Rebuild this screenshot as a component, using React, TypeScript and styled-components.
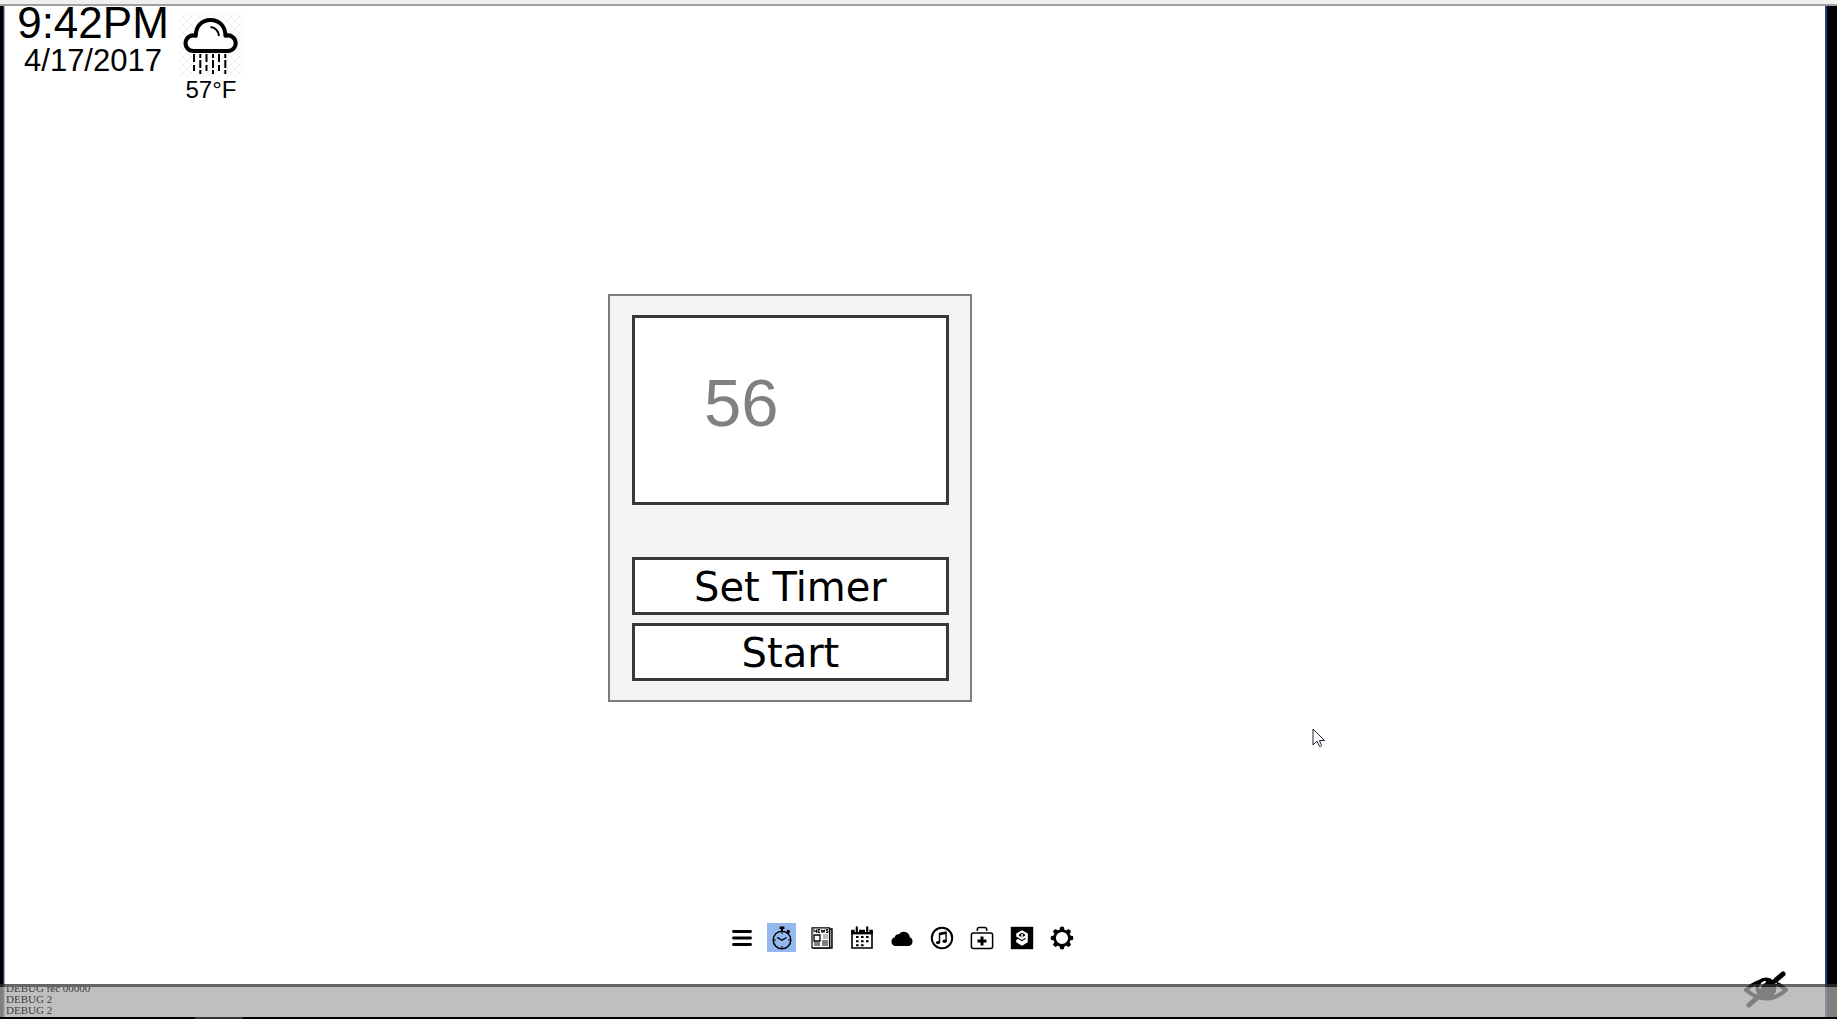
import React from "react";
import styled, { createGlobalStyle } from "styled-components";

const GlobalStyle = createGlobalStyle`
  *, *::before, *::after { box-sizing: border-box; }
  html, body { margin: 0; background: #000; }
  body { font-family: "Liberation Sans", Arial, sans-serif; color: #000; overflow: hidden; }
  button { font: inherit; color: inherit; cursor: pointer; }
`;

const Screen = styled.div`
  position: relative;
  display: flex;
  flex-direction: column;
  height: 100vh;
`;

const TopStrip = styled.div`
  flex: none;
  height: 6px;
  background: #f0f0f0;
  border-bottom: 2px solid #a0a0a0;
`;

const BottomStrip = styled.div`
  flex: none;
  height: 2px;
  padding-left: 195px;
  background: #000;
`;

const StripThumb = styled.div`
  width: 48px;
  height: 2px;
  background: #333;
`;

const Mirror = styled.main`
  flex: 1;
  display: flex;
  flex-direction: column;
  min-height: 0;
  margin: 0 10px 0 3px;
  background: #fff;
  border-left: 1px solid #24407c;
  border-right: 2px solid #24407c;
  box-shadow: inset 1px 0 #a8a8a8;
`;

const Header = styled.header`
  display: flex;
  align-items: flex-start;
  gap: 10px;
  height: 100px;
  padding-left: 13px;
`;

const Clock = styled.div`
  display: flex;
  flex-direction: column;
  align-items: center;
  width: 152px;
`;

const Time = styled.time`
  font-size: 44px;
  line-height: 34px;
`;

const DateText = styled.time`
  font-size: 31px;
  line-height: 42px;
`;

const Weather = styled.div`
  display: flex;
  flex-direction: column;
  align-items: center;
  width: 64px;
  padding-top: 7px;
  font-size: 24px;
  line-height: 26px;
`;

const WeatherIcon = styled.svg`
  display: block;
  width: 64px;
  height: 64px;
`;

const Stage = styled.section`
  flex: 1;
  padding: 188px 0 0 calc(33% + 3px);
`;

const Card = styled.div`
  display: flex;
  flex-direction: column;
  width: 364px;
  padding: 19px 21px 19px 22px;
  background: #f4f4f4;
  border: 2px solid #7c7c7c;
`;

const Display = styled.output`
  display: block;
  height: 190px;
  margin-bottom: 52px;
  padding: 46px 69px;
  background: #fff;
  border: 3px solid #383838;
  color: #808080;
  font-size: 67px;
  line-height: 78px;
`;

const TimerButtons = styled.div`
  display: flex;
  flex-direction: column;
  gap: 8px;
`;

const TimerButton = styled.button`
  height: 58px;
  padding: 2px 0 0;
  background: #fff;
  border: 3px solid #383838;
  && { font-family: "DejaVu Sans", Verdana, sans-serif; font-size: 40px; line-height: 44px; }
`;

const Dock = styled.nav`
  display: flex;
  justify-content: center;
  gap: 11px;
  padding: 0 26px 65px 0;
`;

const DockButton = styled.button<{ $active?: boolean }>`
  display: grid;
  place-items: center;
  width: 29px;
  height: 29px;
  padding: 0;
  border: 0;
  background: ${({ $active }) => ($active ? "#94b7ef" : "transparent")};
`;

const DockIcon = styled.svg`
  display: block;
  width: 24px;
  height: 24px;
`;

const DebugPanel = styled.footer`
  position: absolute;
  left: 0;
  right: 0;
  bottom: 2px;
  display: flex;
  flex-direction: column;
  justify-content: flex-end;
  height: 33px;
  padding: 0 0 1px 6px;
  overflow: hidden;
  background: rgba(170, 170, 170, 0.75);
  background-clip: padding-box;
  border-top: 3px solid rgba(50, 50, 50, 0.75);
  color: #404040;
  font-family: "Liberation Serif", "Times New Roman", serif;
  font-size: 11px;
  line-height: 11px;
`;

const DebugLine = styled.div`
  flex: none;
`;

const HideButton = styled.button`
  position: absolute;
  right: 48px;
  bottom: 11px;
  width: 46px;
  height: 38px;
  padding: 0;
  border: 0;
  background: transparent;
  svg { display: block; width: 100%; height: 100%; }
`;

const Pointer = styled.svg`
  position: absolute;
  left: 1312px;
  top: 728px;
  width: 14px;
  height: 22px;
`;

const dockItems: { label: string; active?: boolean; art: React.ReactNode }[] = [
  {
    label: "Menu",
    art: <path d="M3.500 5.500h17M3.500 12h17M3.500 18.500h17" stroke="#000" strokeWidth="2.900" strokeLinecap="round" />,
  },
  {
    label: "Timer",
    active: true,
    art: (
      <g fill="none" stroke="#000">
        <circle cx="12" cy="14" r="8.800" strokeWidth="1.500" />
        <path d="M12 5.500V2.500M17.300 7.500l1.500-1.800" strokeWidth="2" />
        <path d="M9.600 1.800h4.800M17.200 4.400l2.400 1.900" strokeWidth="2.400" />
        <path d="M7.200 11.300l4.800 3 4.500-2.800" strokeWidth="1.400" />
        <path d="M12 20v2M4 14h2M18 14h2M12 6v2" strokeWidth="1" />
      </g>
    ),
  },
  {
    label: "News",
    art: (
      <g fill="none" stroke="#000">
        <path d="M19 3h3v19H3" fill="#aaa" strokeWidth="1.400" />
        <path d="M2 1.800h17.500v20H2z" fill="#fff" strokeWidth="1.200" />
        <path d="M13 8h5v5h-5z" fill="#bbb" stroke="none" />
        <path d="M4 9h6v6H4z" strokeWidth="1.300" />
        <path d="M4 6.500v-3l2.500 3v-3M10 3.500H8v3h2M8 5h1.600M11.200 3.500l.8 3 1-2.500 1 2.500.8-3M18 3.500h-1.700v1.400H18v1.600h-2" strokeWidth="1" />
        <path d="M4 17h6M4 19h6M12 15h6M12 17h6M12 19h6" strokeWidth="1" />
      </g>
    ),
  },
  {
    label: "Calendar",
    art: (
      <g>
        <path d="M2 4.500h20V22H2z" fill="#fff" stroke="#000" strokeWidth="1.600" />
        <path d="M1.200 4h21.600v4.400H1.200z" />
        <path d="M6.800 2v4M17.200 2v4" stroke="#fff" strokeWidth="4.400" />
        <path d="M6.800 1.400v4M17.200 1.400v4" stroke="#000" strokeWidth="2.200" strokeLinecap="round" />
        <path d="M6 10h2.600v2H6zM11 10h2.600v2H11zM16 10h2.600v2H16zM6 14.200h2.600v2H6zM11 14.200h2.600v2H11zM16 14.200h2.600v2H16zM6 18.200h2.600v2H6zM11 18.200h2.600v2H11z" />
      </g>
    ),
  },
  {
    label: "Weather",
    art: <path d="M5.500 20a4.500 4.500 0 0 1-.8-8.800A4 4 0 0 1 9 8.200a6 6 0 0 1 10.800 3.100A4.600 4.600 0 0 1 18.800 20z" />,
  },
  {
    label: "Music",
    art: (
      <g>
        <circle cx="12" cy="12" r="10.200" fill="none" stroke="#000" strokeWidth="2" />
        <path d="M9.500 16.500V7.400l6.600-1.200v9" fill="none" stroke="#000" strokeWidth="1.400" />
        <path d="M9.500 8.300l6.600-1.300" stroke="#000" strokeWidth="1.800" />
        <ellipse cx="8" cy="16.600" rx="2.100" ry="1.700" />
        <ellipse cx="14.600" cy="15.300" rx="2.100" ry="1.700" />
      </g>
    ),
  },
  {
    label: "Health",
    art: (
      <g fill="none" stroke="#000">
        <rect x="1.400" y="7" width="21.200" height="15.600" rx="2" strokeWidth="1.500" />
        <path d="M7.300 5V3.500q0-2 2-2h5.400q2 0 2 2V5" strokeWidth="1.500" />
        <path d="M12 10.500v9M7.500 15h9" strokeWidth="3" />
      </g>
    ),
  },
  {
    label: "Social",
    art: (
      <g>
        <path d="M.8 .8h22.400v22.400H.8z" />
        <path d="M12 4.200l5.800 3.200v8.800L12 19.800l-5.800-3.600v-2.400l2.200-.8 3.600 2.300 3.600-2.300v-1.200L12 14l-5.800-3.400V7.400z" fill="#fff" />
        <path d="M12 6.800l3 1.700v1.200l-3 1.700-3-1.700V8.500z" />
        <path d="M12 8v3" stroke="#fff" strokeWidth="1.600" />
      </g>
    ),
  },
  {
    label: "Settings",
    art: (
      <g>
        <circle cx="12" cy="12" r="7.400" fill="none" stroke="#000" strokeWidth="2.600" />
        {[0, 45, 90, 135, 180, 225, 270, 315].map((angle) => (
          <path key={angle} d="M9.500 5l.5-3.800q2-1.200 4 0l.5 3.800z" transform={`rotate(${angle} 12 12)`} />
        ))}
      </g>
    ),
  },
];

function RainCloud() {
  return (
    <WeatherIcon viewBox="0 0 64 64" role="img" aria-label="Rain">
      <defs>
        <pattern id="lattice" width="8" height="8" patternUnits="userSpaceOnUse">
          <path d="M0 0l8 8M8 0L0 8" stroke="#f3f3f3" strokeWidth="1" />
        </pattern>
      </defs>
      <path d="M0 0h64v64H0z" fill="url(#lattice)" />
      <path
        d="M14.500 38a7.800 7.800 0 1 1 2.300-15.200C16.800 13 23 7 31.500 7S46.400 13 46.400 22.800A7.800 7.800 0 1 1 49 38z"
        fill="#fff"
        stroke="#000"
        strokeWidth="4"
        strokeLinejoin="round"
      />
      <path d="M31.500 14q7.500 1 8.500 9" fill="none" stroke="#000" strokeWidth="2" />
      <path d="M15 41v17M27.500 41v17M40 41v17" stroke="#000" strokeWidth="2" strokeDasharray="8 3 6 9" />
      <path d="M21.300 41v20M34 41v20M46.300 41v20" stroke="#000" strokeWidth="2" strokeDasharray="4 2 8 2 4 9" />
    </WeatherIcon>
  );
}

export default function App() {
  return (
    <>
      <GlobalStyle />
      <Screen>
        <TopStrip />
        <Mirror>
          <Header>
            <Clock>
              <Time>9:42PM</Time>
              <DateText>4/17/2017</DateText>
            </Clock>
            <Weather>
              <RainCloud />
              <span>57°F</span>
            </Weather>
          </Header>
          <Stage>
            <Card>
              <Display>56</Display>
              <TimerButtons>
                <TimerButton type="button">Set Timer</TimerButton>
                <TimerButton type="button">Start</TimerButton>
              </TimerButtons>
            </Card>
          </Stage>
          <Dock aria-label="Apps">
            {dockItems.map(({ label, active, art }) => (
              <DockButton key={label} type="button" aria-label={label} $active={active}>
                <DockIcon viewBox="0 0 24 24">{art}</DockIcon>
              </DockButton>
            ))}
          </Dock>
        </Mirror>
        <BottomStrip>
          <StripThumb />
        </BottomStrip>
        <HideButton type="button" aria-label="Hide">
          <svg viewBox="0 0 46 38">
            <path d="M3 20Q22 2 43 20 23 37 3 20z" fill="#fff" stroke="#000" strokeWidth="4" strokeLinejoin="round" />
            <path d="M5 18Q22 2 41 18q-10-4-18-4T5 18z" />
            <circle cx="23" cy="18" r="10.500" />
            <path d="M17 18q1-5 5-6" fill="none" stroke="#fff" strokeWidth="2" strokeLinecap="round" />
            <path d="M33 14v-3l2-1" fill="none" stroke="#fff" strokeWidth="1.500" />
            <path d="M6 35l9-8M33 10l7-6" stroke="#000" strokeWidth="5" strokeLinecap="round" />
            <path d="M14 28L34 9" stroke="#000" strokeWidth="4" />
          </svg>
        </HideButton>
        <DebugPanel>
          <DebugLine>DEBUG rec 00000</DebugLine>
          <DebugLine>DEBUG 2</DebugLine>
          <DebugLine>DEBUG 2</DebugLine>
        </DebugPanel>
        <Pointer viewBox="0 0 14 22" aria-hidden="true">
          <path d="M1 1v16l4-4 2.500 5.500q1.500.5 2-1L7.500 12.500H12.500z" fill="#fff" stroke="#223" strokeWidth="1" />
        </Pointer>
      </Screen>
    </>
  );
}
